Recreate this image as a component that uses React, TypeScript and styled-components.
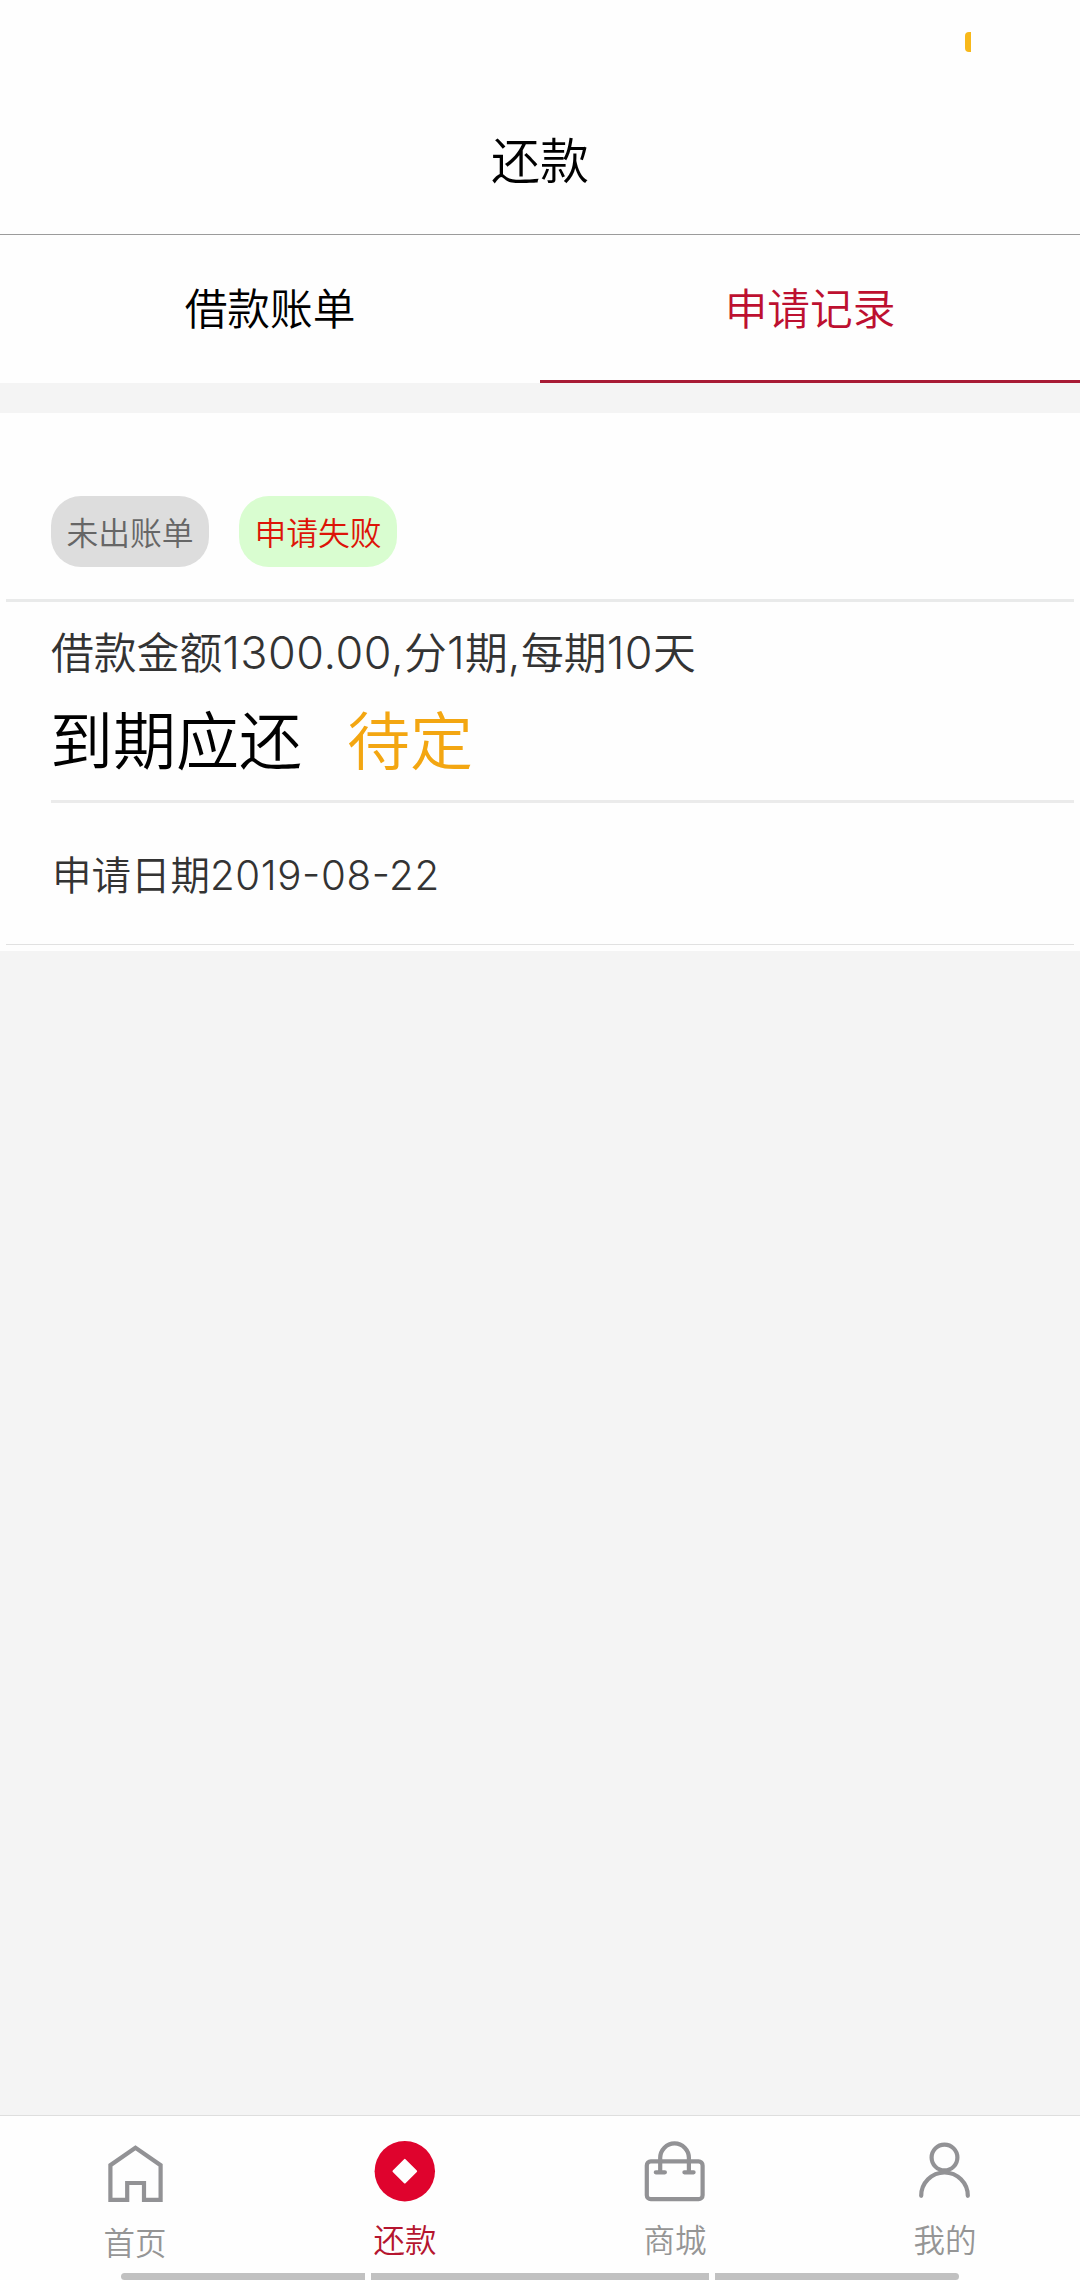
import React from 'react';
import styled, { createGlobalStyle } from 'styled-components';

const GlobalStyle = createGlobalStyle`
  * { box-sizing: border-box; }
  body {
    margin: 0;
    background: #f4f4f4;
    font-family: Inter, "Noto Sans CJK SC DemiLight", "Noto Sans CJK SC", sans-serif;
    font-weight: 350;
  }
`;

const Screen = styled.div`
  display: flex;
  flex-direction: column;
  width: 1080px;
  height: 2280px;
  background: #f4f4f4;
  overflow: hidden;
`;

const StatusBar = styled.div`
  display: flex;
  justify-content: flex-end;
  height: 84px;
  padding: 32px 109px 0 0;
  background: #fefefe;
`;

const Battery = styled.span`
  width: 6px;
  height: 20px;
  border-radius: 4px 0 0 4px;
  background: #f8b81a;
`;

const Header = styled.h1`
  display: flex;
  align-items: center;
  justify-content: center;
  height: 151px;
  margin: 0;
  padding-top: 5px;
  border-bottom: 1px solid #9b9b9b;
  background: #fefefe;
  color: #000;
  font-size: 49px;
  font-weight: 350;
  line-height: 72px;
`;

const Tabs = styled.nav`
  display: flex;
  height: 148px;
  margin-bottom: 30px;
  background: #fefefe;
`;

const Tab = styled.button<{ $active?: boolean }>`
  flex: 1;
  padding: 4px 0 0;
  border: 0;
  border-bottom: 3px solid ${p => (p.$active ? '#a81b35' : 'transparent')};
  background: none;
  color: ${p => (p.$active ? '#bd1030' : '#000')};
  font: inherit;
  font-size: 42.7px;
  line-height: 60px;
`;

const Card = styled.section`
  display: flex;
  flex-direction: column;
  height: 538px;
  padding: 0 6px 6px;
  background: #fefefe;
`;

const TagRow = styled.div`
  display: flex;
  gap: 30px;
  height: 189px;
  padding: 83px 0 0 45px;
  border-bottom: 3px solid #e9eaea;
`;

const Tag = styled.span<{ $bg: string; $color: string }>`
  display: flex;
  align-items: center;
  justify-content: center;
  width: 158px;
  height: 71px;
  padding-top: 4px;
  border-radius: 30px;
  background: ${p => p.$bg};
  color: ${p => p.$color};
  font-size: 31.8px;
  line-height: 44px;
`;

const Details = styled.div`
  height: 201px;
  margin-left: 45px;
  padding-top: 22px;
  border-bottom: 3px solid #ebebeb;
`;

const Summary = styled.div`
  height: 60px;
  color: #333;
  font-size: 42.8px;
  line-height: 60px;
  white-space: nowrap;
`;

const Digits = styled.span<{ $scale: number; $spacing: number }>`
  font-size: ${p => p.$scale}em;
  letter-spacing: ${p => p.$spacing}px;
  line-height: 1;
`;

const Due = styled.div`
  display: flex;
  gap: 45px;
  margin-left: -1px;
  padding-top: 11px;
  color: #000;
  font-size: 63px;
  line-height: 92px;
`;

const Pending = styled.span`
  color: #f3a611;
`;

const DateRow = styled.div`
  flex: 1;
  padding: 44px 0 0 46px;
  border-bottom: 1px solid #e1e1e1;
  color: #333;
  font-size: 39.5px;
  line-height: 58px;
  font-feature-settings: "case";
`;

const Spacer = styled.div`
  flex: 1;
`;

const BottomNav = styled.nav`
  display: flex;
  height: 158px;
  border-top: 1px solid #dedede;
  background: #fefefe;
`;

const NavItem = styled.div<{ $active?: boolean; $drop?: number }>`
  display: flex;
  flex: 1;
  flex-direction: column;
  align-items: center;
  gap: ${p => 16 + (p.$drop ?? 0)}px;
  padding-top: 24px;
  color: ${p => (p.$active ? '#b5152f' : '#959595')};
  font-size: 31.5px;
  line-height: 46px;
`;

const Icon = styled.svg`
  flex: none;
  width: 62px;
  height: 62px;
  fill: none;
  stroke: #929295;
  stroke-width: 4.2;
`;

const GestureBar = styled.div`
  display: flex;
  justify-content: center;
  gap: 6px;
  height: 7px;
  background: #fefefe;
`;

const Segment = styled.span<{ $w: number; $radius?: string }>`
  width: ${p => p.$w}px;
  border-radius: ${p => p.$radius ?? '0'};
  background: #c1c1c1;
`;

const Amount = ({ children }: { children: React.ReactNode }) => (
  <Digits $scale={1.05} $spacing={0.5}>{children}</Digits>
);

export default function App() {
  return (
    <Screen>
      <GlobalStyle />
      <StatusBar><Battery /></StatusBar>
      <Header>还款</Header>
      <Tabs>
        <Tab>借款账单</Tab>
        <Tab $active>申请记录</Tab>
      </Tabs>
      <Card>
        <TagRow>
          <Tag $bg="#dddddd" $color="#666">未出账单</Tag>
          <Tag $bg="#d9fdd0" $color="#dd1408">申请失败</Tag>
        </TagRow>
        <Details>
          <Summary>
            借款金额<Amount>1300.00,</Amount>分<Amount>1</Amount>期
            <Amount>,</Amount>每期<Amount>10</Amount>天
          </Summary>
          <Due><span>到期应还</span><Pending>待定</Pending></Due>
        </Details>
        <DateRow>申请日期<Digits $scale={1.02} $spacing={0.6}>2019-08-22</Digits></DateRow>
      </Card>
      <Spacer />
      <BottomNav>
        <NavItem $drop={3}>
          <Icon viewBox="0 0 62 62">
            <path d="M31.5 7.8 6.4 25.2V59.8H23.2V43H40V59.8H56.6V25.2Z" />
          </Icon>
          首页
        </NavItem>
        <NavItem $active>
          <Icon viewBox="0 0 62 62">
            <circle cx="30.8" cy="31.2" r="30.2" fill="#df032d" stroke="none" />
            <path d="M30.8 19.9 42.1 31.2 30.8 42.5 19.5 31.2Z" fill="#fefefe" stroke="#fefefe" strokeWidth="2" strokeLinejoin="round" />
          </Icon>
          还款
        </NavItem>
        <NavItem>
          <Icon viewBox="0 0 62 62" strokeLinecap="round">
            <rect x="2.8" y="21.4" width="55.8" height="37.8" rx="4" />
            <path d="M16.2 32.3V17.8a14.3 14.3 0 0 1 28.7 0V32.3M11.8 32.3H20.9M40.4 32.3H49.6" />
          </Icon>
          商城
        </NavItem>
        <NavItem>
          <Icon viewBox="0 0 62 62" strokeLinecap="round">
            <circle cx="30.5" cy="17.5" r="12.9" />
            <path d="M7.2 55.8a23.3 23.3 0 0 1 46.6 0" />
          </Icon>
          我的
        </NavItem>
      </BottomNav>
      <GestureBar>
        <Segment $w={244} $radius="7px 0 0 7px" />
        <Segment $w={338} />
        <Segment $w={244} $radius="0 7px 7px 0" />
      </GestureBar>
    </Screen>
  );
}
